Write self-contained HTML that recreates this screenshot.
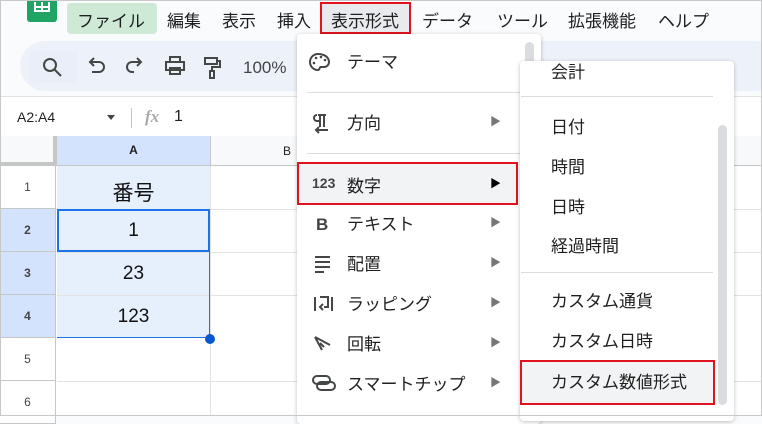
<!DOCTYPE html>
<html><head><meta charset="utf-8"><style>
*{margin:0;padding:0;box-sizing:border-box}
body{width:762px;height:416px;overflow:hidden;background:#f9fbfd;font-family:"Liberation Sans","Noto Sans CJK JP",sans-serif;color:#1f1f1f;position:relative}
.a{position:absolute}
.mb{font-size:17px;top:7px;white-space:nowrap}
.ic{stroke:#444746;fill:none;stroke-width:2}
.mi{position:absolute;left:0;width:221px;height:40px;font-size:17px}
.mi .t{position:absolute;left:50px;top:6px}
.mi .ar{position:absolute;left:193px;top:10px;font-size:11px;color:#777}
.si{position:absolute;left:31px;font-size:17px;white-space:nowrap}
.rh{position:absolute;left:0;width:56px;font-size:12px;text-align:center;color:#444;border-bottom:1px solid #c4c7c5;border-right:1px solid #c4c7c5}
.gl{position:absolute;height:1px;background:#e1e3e1}
.cv{position:absolute;left:57px;width:153px;text-align:center;font-size:19px;color:#111}
</style></head><body>
<div class="a" style="left:0;top:0;width:762px;height:416px;border:1px solid #c8c8c8;z-index:20;pointer-events:none"></div>
<div class="a" style="left:27px;top:0;width:30px;height:22px;background:#1fa463;border-radius:0 0 3px 3px"></div>
<div class="a" style="left:34px;top:2px;width:16px;height:10px;border:2px solid #fff;border-top:none"></div>
<div class="a" style="left:41px;top:2px;width:2px;height:10px;background:#fff"></div>
<div class="a" style="left:34px;top:6px;width:16px;height:2px;background:#fff"></div>
<div class="a" style="left:67px;top:3px;width:90px;height:31px;background:#ceead6;border-radius:4px"></div>
<div class="a mb" style="left:77px">ファイル</div>
<div class="a mb" style="left:167px">編集</div>
<div class="a mb" style="left:222px">表示</div>
<div class="a mb" style="left:277px">挿入</div>
<div class="a" style="left:320px;top:2px;width:91px;height:32px;background:#e8eaed;border:2px solid #e0141e"></div>
<div class="a mb" style="left:331px">表示形式</div>
<div class="a mb" style="left:422px">データ</div>
<div class="a mb" style="left:497px">ツール</div>
<div class="a mb" style="left:568px">拡張機能</div>
<div class="a mb" style="left:658px">ヘルプ</div>
<div class="a" style="left:20px;top:41px;width:760px;height:50px;background:#edf2fa;border-radius:25px"></div>
<div class="a" style="left:30px;top:51px;width:48px;height:32px;background:#e9eef8"></div>
<svg class="a" style="left:0;top:40px" width="300" height="55">
<circle class="ic" cx="50" cy="25" r="6"/><path class="ic" d="M54 29l7 7"/>
<path class="ic" d="M90 22h9a5 5 0 0 1 0 10h-7M94 18l-4 4 4 4"/>
<path class="ic" d="M141 22h-9a5 5 0 0 0 0 10h2M137 18l4 4-4 4"/>
<path class="ic" d="M170 22v-5h10v5M166 22h18v8h-18zM170 28h10v6h-10z"/>
<path class="ic" d="M205 18h12v6h-12zM217 21h3v6h-8v4M210 31h4v7h-4z"/>
<text x="243" y="33" font-size="17" fill="#444" font-family="Liberation Sans">100%</text>
</svg>
<div class="a" style="left:0;top:96px;width:762px;height:40px;background:#fff;border-top:1px solid #e1e3e1"></div>
<div class="a" style="left:17px;top:109px;font-size:14px">A2:A4</div>
<div class="a" style="left:107px;top:115px;border:4px solid transparent;border-top:5px solid #444"></div>
<div class="a" style="left:131px;top:108px;width:1px;height:20px;background:#c4c7c5"></div>
<div class="a" style="left:145px;top:107px;font-size:17px;color:#aaa;font-style:italic;font-family:'Liberation Serif',serif;font-weight:bold">fx</div>
<div class="a" style="left:174px;top:108px;font-size:16px">1</div>
<div class="a" style="left:0;top:136px;width:762px;height:280px;background:#fff"></div>
<div class="a" style="left:0;top:136px;width:57px;height:30px;background:#f8f9fa;border-right:4px solid #c4c7c5;border-bottom:4px solid #c4c7c5"></div>
<div class="a" style="left:57px;top:136px;width:153px;height:30px;background:#d3e3fd;border-bottom:1px solid #c4c7c5;font-size:12px;text-align:center;line-height:29px;font-weight:bold;color:#222">A</div>
<div class="a" style="left:210px;top:136px;width:552px;height:30px;background:#f8f9fa;border-bottom:1px solid #c4c7c5;border-left:1px solid #c4c7c5"></div>
<div class="a" style="left:283px;top:144px;font-size:12px">B</div>
<div class="rh" style="top:166px;height:43px;line-height:42px;background:#fff">1</div>
<div class="rh" style="top:209px;height:43px;line-height:42px;background:#d3e3fd;font-weight:bold">2</div>
<div class="rh" style="top:252px;height:43px;line-height:42px;background:#d3e3fd;font-weight:bold">3</div>
<div class="rh" style="top:295px;height:43px;line-height:42px;background:#d3e3fd;font-weight:bold">4</div>
<div class="rh" style="top:338px;height:43px;line-height:42px;background:#fff">5</div>
<div class="rh" style="top:381px;height:43px;line-height:42px;background:#fff">6</div>
<div class="a" style="left:57px;top:166px;width:153px;height:172px;background:#e6effc"></div>
<div class="gl" style="left:57px;top:252px;width:705px"></div>
<div class="gl" style="left:57px;top:295px;width:705px"></div>
<div class="gl" style="left:210px;top:209px;width:552px"></div>
<div class="gl" style="left:57px;top:381px;width:705px"></div>
<div class="a" style="left:210px;top:166px;width:1px;height:250px;background:#e1e3e1"></div>
<div class="a" style="left:57px;top:209px;width:153px;height:43px;border:2px solid #1a73e8"></div>
<div class="a" style="left:57px;top:252px;width:153px;height:86px;border-right:1px solid #1a73e8;border-bottom:1px solid #1a73e8"></div>
<div class="a" style="left:205px;top:334px;width:10px;height:10px;border-radius:50%;background:#0b57d0"></div>
<div class="cv" style="top:177px;font-size:21px">番号</div>
<div class="cv" style="top:220px">1</div>
<div class="cv" style="top:263px">23</div>
<div class="cv" style="top:306px">123</div>
<div class="a" style="left:297px;top:34px;width:244px;height:390px;background:#fff;border-radius:4px;box-shadow:0 1px 4px rgba(0,0,0,.25)">
<div class="a" style="left:228px;top:8px;width:9px;height:24px;background:#dadce0;border-radius:5px"></div>
<div class="mi" style="top:8px"><span class="t">テーマ</span></div>
<div class="a" style="left:10px;top:58px;width:222px;height:1px;background:#dadce0"></div>
<div class="mi" style="top:69px"><span class="t">方向</span><span class="ar">▶</span></div>
<div class="a" style="left:10px;top:119px;width:222px;height:1px;background:#dadce0"></div>
<div class="mi" style="top:128px;height:43px;background:#f1f3f4;border:2px solid #e0141e"><span class="t" style="left:48px;top:8px">数字</span><span class="ar" style="left:191px;top:11px;color:#000">▶</span><span style="position:absolute;left:13px;top:11px;font-size:14px;font-weight:bold;color:#444">123</span></div>
<div class="mi" style="top:170px"><span class="t">テキスト</span><span class="ar">▶</span></div>
<div class="mi" style="top:210px"><span class="t">配置</span><span class="ar">▶</span></div>
<div class="mi" style="top:250px"><span class="t">ラッピング</span><span class="ar">▶</span></div>
<div class="mi" style="top:290px"><span class="t">回転</span><span class="ar">▶</span></div>
<div class="mi" style="top:330px"><span class="t">スマートチップ</span><span class="ar">▶</span></div>
<svg class="a" style="left:0;top:0" width="50" height="380">
<path class="ic" d="M21 20a8 8 0 1 0 0 16c2 0 1-3 3-3h3a5 5 0 0 0 5-5c0-5-5-8-11-8z" stroke-width="1.7"/>
<circle cx="19" cy="24" r="1.3" fill="#444"/><circle cx="24" cy="23" r="1.3" fill="#444"/><circle cx="28" cy="26" r="1.3" fill="#444"/><circle cx="17" cy="29" r="1.3" fill="#444"/>
<path class="ic" d="M23 81v12M27 81v12M21 81h8M20 81a3 3 0 0 0 0 6h3M19 96h12M22 93l-3 3 3 3" stroke-width="1.7"/>
<text x="19" y="196" font-size="17" font-weight="bold" fill="#444" font-family="Liberation Sans">B</text>
<path class="ic" d="M18 223h15M18 228h15M18 233h15M18 238h9" stroke-width="1.7"/>
<path class="ic" d="M18 263v14M23 263h8v10h-4M26 270l-3 3 3 3M35 263v14" stroke-width="1.7"/>
<path class="ic" d="M18 303l15 8M18 303l7 13M23 309l4 4" stroke-width="1.7"/>
<path class="ic" d="M20 342h9a4 4 0 0 1 0 8h-9a4 4 0 0 1 0-8zM24 348h10a4 4 0 0 1 0 8h-10a4 4 0 0 1 0-8z" stroke-width="1.7"/>
</svg>
</div>
<div class="a" style="left:520px;top:61px;width:214px;height:360px;background:#fff;border-radius:4px;box-shadow:0 1px 4px rgba(0,0,0,.25)">
<div class="si" style="top:-3px">会計</div>
<div class="a" style="left:1px;top:35px;width:192px;height:1px;background:#dadce0"></div>
<div class="si" style="top:52px">日付</div>
<div class="si" style="top:92px">時間</div>
<div class="si" style="top:132px">日時</div>
<div class="si" style="top:171px">経過時間</div>
<div class="a" style="left:1px;top:211px;width:192px;height:1px;background:#dadce0"></div>
<div class="si" style="top:226px">カスタム通貨</div>
<div class="si" style="top:266px">カスタム日時</div>
<div class="a" style="left:0;top:299px;width:195px;height:45px;background:#f1f3f4;border:2px solid #e0141e"></div>
<div class="si" style="top:307px">カスタム数値形式</div>
<div class="a" style="left:198px;top:64px;width:9px;height:280px;background:#dadce0;border-radius:5px"></div>
</div>
</body></html>
